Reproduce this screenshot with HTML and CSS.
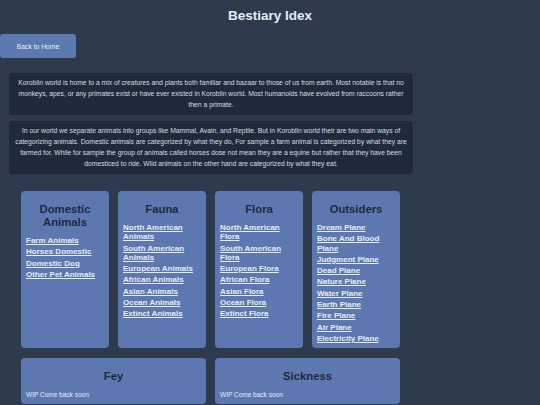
FILE: index.html
```html
<!DOCTYPE html>
<html lang="en">
<head>
<meta charset="utf-8">
<title>Bestiary Idex</title>
<link rel="stylesheet" href="styles.css">
</head>
<body>
<h1 class="page-title">Bestiary Idex</h1>
<main class="container">
  <a class="home-btn" href="#">Back to Home</a>
  <section class="info">
    <p>Koroblin world is home to a mix of creatures and plants both familiar and bazaar to those of us from earth. Most notable is that no monkeys, apes, or any primates exist or have ever existed in Koroblin world. Most humanoids have evolved from raccoons rather then a primate.</p>
  </section>
  <section class="info">
    <p>In our world we separate animals into groups like Mammal, Avain, and Reptile. But in Koroblin world their are two main ways of categorizing animals. Domestic animals are categorized by what they do, For sample a farm animal is categorized by what they are farmed for. While for sample the group of animals called horses dose not mean they are a equine but rather that they have been domesticed to ride. Wild animals on the other hand are categorized by what they eat.</p>
  </section>
  <div class="grid">
    <div class="card">
      <h2>Domestic Animals</h2>
      <ul class="links">
        <li><a href="#">Farm Animals</a></li>
        <li><a href="#">Horses Domestic</a></li>
        <li><a href="#">Domestic Dog</a></li>
        <li><a href="#">Other Pet Animals</a></li>
      </ul>
    </div>
    <div class="card">
      <h2>Fauna</h2>
      <ul class="links">
        <li><a href="#">North American Animals</a></li>
        <li><a href="#">South American Animals</a></li>
        <li><a href="#">European Animals</a></li>
        <li><a href="#">African Animals</a></li>
        <li><a href="#">Asian Animals</a></li>
        <li><a href="#">Ocean Animals</a></li>
        <li><a href="#">Extinct Animals</a></li>
      </ul>
    </div>
    <div class="card">
      <h2>Flora</h2>
      <ul class="links">
        <li><a href="#">North American Flora</a></li>
        <li><a href="#">South American Flora</a></li>
        <li><a href="#">European Flora</a></li>
        <li><a href="#">African Flora</a></li>
        <li><a href="#">Asian Flora</a></li>
        <li><a href="#">Ocean Flora</a></li>
        <li><a href="#">Extinct Flora</a></li>
      </ul>
    </div>
    <div class="card">
      <h2>Outsiders</h2>
      <ul class="links">
        <li><a href="#">Dream Plane</a></li>
        <li><a href="#">Bone And Blood Plane</a></li>
        <li><a href="#">Judgment Plane</a></li>
        <li><a href="#">Dead Plane</a></li>
        <li><a href="#">Nature Plane</a></li>
        <li><a href="#">Water Plane</a></li>
        <li><a href="#">Earth Plane</a></li>
        <li><a href="#">Fire Plane</a></li>
        <li><a href="#">Air Plane</a></li>
        <li><a href="#">Electricity Plane</a></li>
      </ul>
    </div>
    <div class="card wide">
      <h2>Fey</h2>
      <p class="wip">WIP Come back soon</p>
    </div>
    <div class="card wide">
      <h2>Sickness</h2>
      <p class="wip">WIP Come back soon</p>
    </div>
  </div>
</main>
</body>
</html>
```

FILE: styles.css
```css
html, body {
  margin: 0;
  padding: 0;
}
body {
  background: #2d3b4d;
  font-family: "Liberation Sans", Arial, sans-serif;
  color: #e6ebf3;
}
.page-title {
  margin: 8px 0 0;
  font-size: 13.5px;
  line-height: 16px;
  text-align: center;
  color: #e4ecf6;
  font-weight: bold;
}
.container {
  width: 421px;
  padding-top: 10px;
}
.home-btn {
  display: flex;
  align-items: center;
  justify-content: center;
  width: 76px;
  height: 24px;
  box-sizing: border-box;
  background: #5c79b1;
  color: #e8eef8;
  font-size: 6.75px;
  text-decoration: none;
  border-radius: 3px;
}
.info {
  margin: 15px 8px 0 9px;
  background: #1f2a3a;
  border-radius: 3px;
  padding: 4px 6px 5px;
}
.info + .info {
  margin-top: 6px;
}
.info p {
  margin: 0;
  font-size: 6.75px;
  line-height: 11px;
  text-align: center;
  color: #d6dce4;
}
.grid {
  display: grid;
  grid-template-columns: repeat(4, 1fr);
  column-gap: 9px;
  row-gap: 10px;
  width: 379px;
  margin: 17px 0 0 21px;
}
.card {
  background: #5d78b0;
  border-radius: 4px;
  padding: 8px 5px 5px;
}
.card.wide {
  grid-column: span 2;
}
.card h2 {
  margin: 4px 0 7px;
  font-size: 11.3px;
  line-height: 13px;
  text-align: center;
  color: #1f2a3e;
  font-weight: bold;
}
.links {
  list-style: none;
  margin: 0;
  padding: 0;
  display: flex;
  flex-direction: column;
  gap: 2.1px;
}
.links li {
  font-size: 8px;
  line-height: 9.2px;
  font-weight: bold;
}
.links a {
  color: #e6ebf5;
  text-decoration: underline;
}
.wip {
  margin: 0;
  font-size: 6.5px;
  line-height: 9px;
  color: #e6ebf5;
}
```
